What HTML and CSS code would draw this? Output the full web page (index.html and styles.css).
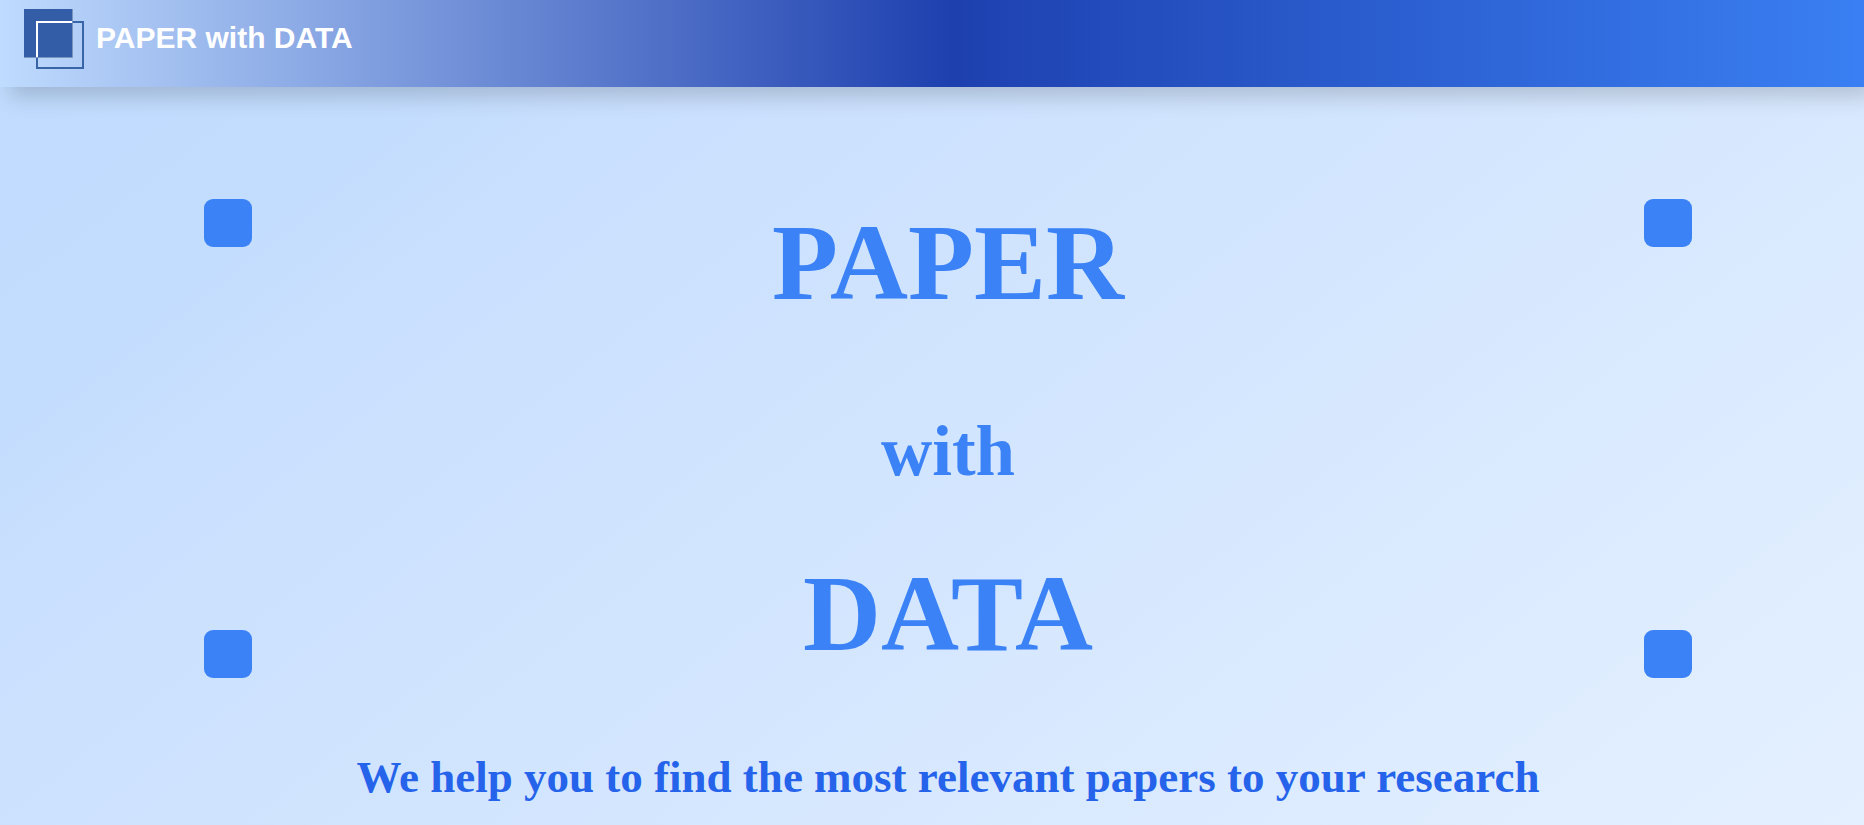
FILE: index.html
```
<!DOCTYPE html>
<html lang="en">
<head>
  <meta charset="utf-8">
  <meta name="viewport" content="width=device-width, initial-scale=1">
  <title>PAPER with DATA</title>
  <link rel="stylesheet" href="styles.css">
</head>
<body>
  <header class="site-header">
    <svg class="logo" width="60" height="60" viewBox="0 0 60 60" aria-hidden="true">
      <rect width="48.500" height="48.500" fill="#345da7"/>
      <rect x="13" y="13" width="46" height="46" fill="none" stroke="#3765a8" stroke-width="2"/>
      <path d="M13 48V13H48" fill="none" stroke="#fff" stroke-width="2"/>
      <path d="M0 48.500H48.500V0" fill="none" stroke="#7896bd" stroke-width="1"/>
    </svg>
    <span class="brand">PAPER with DATA</span>
  </header>
  <main class="hero">
    <div class="stage">
      <div class="squares"><span class="square"></span><span class="square"></span></div>
      <h1 class="title">
        <span class="word">PAPER</span>
        <span class="joiner">with</span>
        <span class="word">DATA</span>
      </h1>
      <div class="squares"><span class="square"></span><span class="square"></span></div>
    </div>
    <p class="tagline">We help you to find the most relevant papers to your research</p>
  </main>
</body>
</html>
```
FILE: styles.css
```
* {
  box-sizing: border-box;
}

body {
  margin: 0;
  min-height: 100vh;
  overflow: hidden;
  background: linear-gradient(142deg, #bfdbfe, #c3ddfe 18%, #c8dffe 24%, #e4f0ff);
  font-family: "Liberation Serif", "Times New Roman", serif;
}

.site-header {
  display: flex;
  align-items: flex-start;
  gap: 12px;
  padding: 9px 24px 18px;
  background: linear-gradient(to right, #bfdbfe, #1e40af 51%, #3b82f6 102%);
  box-shadow: 10px 10px 20px 0 rgba(0, 0, 0, 0.17);
}

.logo {
  flex: none;
}

.brand {
  padding-top: 11px;
  color: #fff;
  font: bold 30px/36px "Liberation Sans", Arial, sans-serif;
}

.hero {
  padding: 112px 0 0 32px;
}

.stage {
  display: flex;
  justify-content: space-between;
  padding: 0 172px;
}

.squares {
  display: flex;
  flex-direction: column;
  justify-content: space-between;
}

.square {
  width: 48px;
  height: 48px;
  border-radius: 9px;
  background: #3b82f6;
}

.title {
  display: flex;
  flex-direction: column;
  align-items: center;
  margin: 0;
  padding: 8px 0;
  color: #3b82f6;
  font-weight: bold;
}

.word {
  font-size: 108px;
  line-height: 112px;
}

.joiner {
  margin: 96px 0 71px;
  font-size: 71px;
  line-height: 72px;
}

.tagline {
  margin: 75px 0 0;
  color: #2563eb;
  font-size: 45px;
  font-weight: bold;
  line-height: 48px;
  text-align: center;
}
```
